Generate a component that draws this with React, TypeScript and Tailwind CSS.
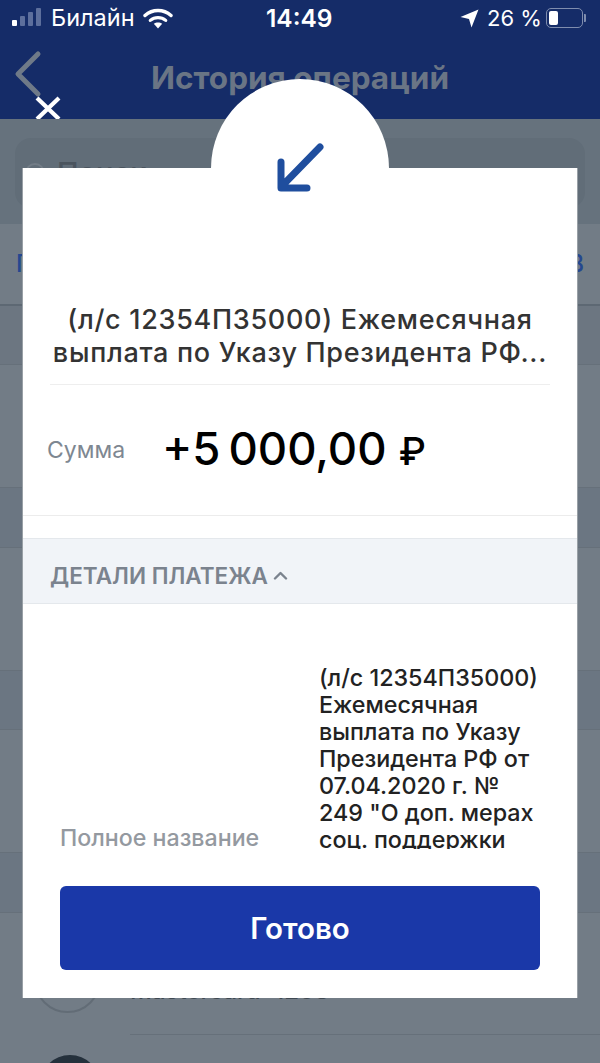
const font = { fontFamily: "Inter, 'Noto Sans', sans-serif" };

function StatusBar() {
  return (
    <div className="relative h-[37px] text-white">
      <div className="absolute left-[12px] top-[8px] flex items-end gap-[3px]">
        <div className="h-[6px] w-[5px] rounded-[1px] bg-white" />
        <div className="h-[10px] w-[5px] rounded-[1px] bg-[#5d6f9c]" />
        <div className="h-[14px] w-[5px] rounded-[1px] bg-[#5d6f9c]" />
        <div className="h-[18px] w-[5px] rounded-[1px] bg-[#5d6f9c]" />
      </div>
      <div className="absolute left-[51px] top-[5px] text-[23.5px] leading-[26px]">Билайн</div>
      <svg className="absolute left-[143px] top-[8px]" width="30" height="21" viewBox="0 0 30 21" fill="none">
        <path d="M2 7.5C9.5 .8 20.5 .8 28 7.5" stroke="#fff" strokeWidth="3.4" strokeLinecap="round" />
        <path d="M7.3 12.4C11.8 8.6 18.2 8.6 22.7 12.4" stroke="#fff" strokeWidth="3.2" strokeLinecap="round" />
        <path d="M10.8 15.8C13.2 13.9 16.8 13.9 19.2 15.8L15 20.5Z" fill="#fff" />
      </svg>
      <div className="absolute left-[266px] top-[5px] text-[24.5px] leading-[26px] font-semibold">14:49</div>
      <svg className="absolute left-[460px] top-[9px]" width="19" height="19" viewBox="0 0 19 19">
        <path d="M18.5 .5L11.5 18.5L9 10L.5 8Z" fill="#fff" />
      </svg>
      <div className="absolute left-[487px] top-[5px] text-[22px] leading-[26px]">26 %</div>
      <div className="absolute left-[546px] top-[8px] h-[20px] w-[37px] rounded-[5px] border border-[#7f8dae] p-[2px]">
        <div className="h-full w-[9px] rounded-[2px] bg-white" />
      </div>
      <div className="absolute left-[584px] top-[14px] h-[8px] w-[2px] rounded-r-[1px] bg-[#7f8dae]" />
    </div>
  );
}

function Header() {
  return (
    <div className="relative h-[119px] overflow-hidden bg-[#152c68]">
      <StatusBar />
      <div className="flex h-[82px] items-start justify-center pt-[22px] text-[31.5px] font-bold leading-[38px] text-[#6a7585]">
        История операций
      </div>
      <svg className="absolute left-[13px] top-[50px]" width="30" height="48" viewBox="0 0 30 48" fill="none">
        <path d="M25 4L5 24L25 44" stroke="#6f7a88" strokeWidth="5" strokeLinecap="round" strokeLinejoin="round" />
      </svg>
      <svg className="absolute left-[35px] top-[96px]" width="26" height="24" viewBox="0 0 26 24" fill="none">
        <path d="M2 2L24 23M24 2L2 23" stroke="#fff" strokeWidth="4.2" />
      </svg>
    </div>
  );
}

function BackgroundList() {
  return (
    <>
      <div className="h-[105px] bg-[#66727d] px-[15px] pt-[19px]">
        <div className="flex h-[70px] items-center gap-[12px] rounded-[16px] bg-[#616d78] px-[10px]">
          <div className="h-[20px] w-[20px] rounded-full border-2 border-[#737d87]" />
          <span className="text-[29px] font-medium text-[#4a545e]">Поиск</span>
        </div>
      </div>
      <div className="flex h-[82px] items-center justify-between border-b-2 border-[#5d6873] bg-[#727c86] px-[16px] text-[24px] font-medium text-[#25478f]">
        <span>ПЛАТЕЖИ</span>
        <span>ПЕРЕВОДОВ</span>
      </div>
      <div className="h-[59px] border-b border-[#66707a] bg-[#6c7681]" />
      <div className="h-[122px] bg-[#727c86]" />
      <div className="h-[61px] border-y border-[#66707a] bg-[#6b7682]" />
      <div className="h-[122px] bg-[#727c86]" />
      <div className="h-[60px] border-y border-[#66707a] bg-[#6b7682]" />
      <div className="h-[122px] bg-[#727c86]" />
      <div className="h-[61px] border-y border-[#66707a] bg-[#6b7682]" />
      <div className="flex h-[122px] gap-[29px] bg-[#727c86] pl-[34px]">
        <div className="mt-[33px] h-[67px] w-[67px] shrink-0 rounded-full border-2 border-[#626c76]" />
        <div className="flex-1 border-b border-[#66707a] pt-[63px] text-[24px] font-medium leading-[30px] text-[#3f4952]">
          Mastercard ·1208
        </div>
      </div>
      <div className="ml-[40px] mt-[20px] h-[60px] w-[60px] rounded-full bg-[#25313c]" />
    </>
  );
}

function Modal() {
  return (
    <div className="absolute left-[22px] top-[168px] h-[830px] w-[556px] border-x border-[#99a0a6] bg-white">
      <div className="pt-[135px] text-center text-[27px] font-medium leading-[33px] tracking-[0.7px] text-[#333]">
        <div className="whitespace-nowrap">(л/с 12354П35000) Ежемесячная</div>
        <div className="whitespace-nowrap">выплата по Указу Президента РФ...</div>
      </div>
      <div className="mx-[27px] mt-[15px] h-px bg-[#eeeeee]" />
      <div className="flex h-[131px] items-center border-b border-[#ececec] pl-[24px]">
        <div className="w-[115px] text-[23px] text-[#7e8791]">Сумма</div>
        <div className="whitespace-nowrap text-[45.5px] font-medium leading-[50px] text-black">
          +5{"\u2009"}000,00 <span className="text-[38px]">₽</span>
        </div>
      </div>
      <div className="mt-[22px] flex h-[66px] items-center gap-[5px] border-y border-[#e4e8ec] bg-[#f1f4f8] pl-[27px] pt-[9px]">
        <span className="text-[22.5px] font-semibold text-[#7b838e]">ДЕТАЛИ ПЛАТЕЖА</span>
        <svg width="15" height="9" viewBox="0 0 15 9" fill="none">
          <path d="M2 7.5L7.5 2L13 7.5" stroke="#7b838e" strokeWidth="2.4" strokeLinecap="round" strokeLinejoin="round" />
        </svg>
      </div>
      <div className="h-[245px] overflow-hidden">
        <div className="flex items-end pl-[37px] pt-[60px]">
          <div className="w-[259px] pb-[1px] text-[23.2px] font-medium leading-[27px] text-[#9499a0]">Полное название</div>
          <div className="w-[224px] text-[23.3px] font-medium leading-[27px] text-[#222]">
            (л/с 12354П35000) Ежемесячная выплата по Указу Президента РФ от 07.04.2020 г. № 249 "О доп. мерах соц. поддержки
          </div>
        </div>
      </div>
      <div className="px-[37px] pt-[37px]">
        <button className="flex h-[84px] w-[480px] items-center justify-center rounded-[6px] bg-[#1a38a8] text-[29.5px] font-semibold text-white">
          Готово
        </button>
      </div>
    </div>
  );
}

export default function App() {
  return (
    <div className="relative h-[1063px] w-[600px] overflow-hidden bg-[#727c86]" style={font}>
      <Header />
      <BackgroundList />
      <Modal />
      <div className="absolute left-[211px] top-[79px] flex h-[178px] w-[178px] justify-center rounded-full bg-white pt-[62px]">
        <svg width="52" height="52" viewBox="0 0 52 52" fill="none">
          <path d="M46 6L8 45M7 21V47H33" stroke="#1f4e9e" strokeWidth="7" strokeLinecap="round" strokeLinejoin="round" />
        </svg>
      </div>
    </div>
  );
}
